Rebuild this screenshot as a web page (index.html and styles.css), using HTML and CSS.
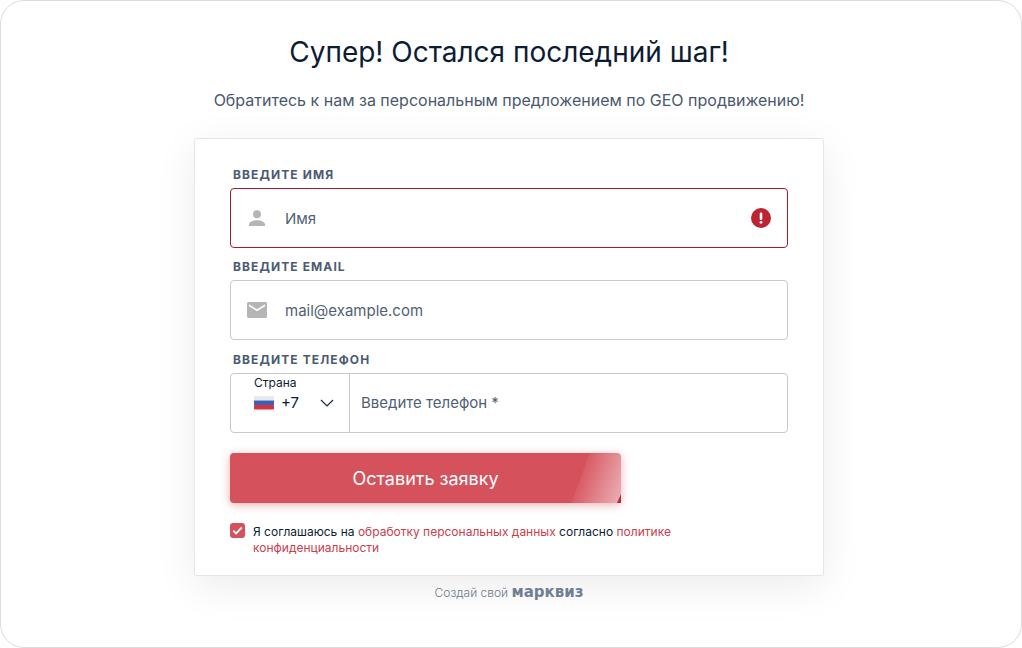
FILE: index.html
```html
<!DOCTYPE html>
<html lang="ru">
<head>
  <meta charset="UTF-8">
  <meta name="viewport" content="width=device-width, initial-scale=1.0">
  <title>Оставить заявку</title>
  <link rel="stylesheet" href="styles.css">
</head>
<body>
  <div class="frame">
    <h1 class="title">Супер! Остался последний шаг!</h1>
    <p class="subtitle">Обратитесь к нам за персональным предложением по GEO продвижению!</p>

    <form class="card">
      <div class="field-label">Введите имя</div>
      <div class="field field-error">
        <svg class="field-icon" width="24" height="24" viewBox="0 0 24 24"><circle cx="12" cy="8.2" r="4"/><path d="M4 20v-1.600c0-2.800 5-4.200 8-4.200s8 1.400 8 4.200V20z"/></svg>
        <span class="placeholder">Имя</span>
        <svg class="error-icon" width="22" height="22" viewBox="0 0 22 22"><circle cx="11" cy="11" r="10" fill="#bd2433"/><rect x="9.7" y="5.5" width="2.6" height="7.5" rx="1.2" fill="#fff"/><circle cx="11" cy="15.3" r="1.4" fill="#fff"/></svg>
      </div>

      <div class="field-label">Введите email</div>
      <div class="field">
        <svg class="field-icon" width="24" height="24" viewBox="0 0 24 24"><path d="M3.500 4h17c.8 0 1.500.7 1.500 1.500v13c0 .8-.7 1.500-1.500 1.500h-17c-.8 0-1.500-.7-1.500-1.500v-13C2 4.700 2.700 4 3.500 4zM12 13.200l8-5V6.300l-8 5-8-5v1.900z" fill-rule="evenodd"/></svg>
        <span class="placeholder">mail@example.com</span>
      </div>

      <div class="field-label">Введите телефон</div>
      <div class="phone">
        <div class="country">
          <div class="country-label">Страна</div>
          <div class="country-value">
            <svg class="flag" width="20" height="14" viewBox="0 0 20 14"><rect y="0" width="20" height="4.500" rx="1" fill="#e9e9ee"/><rect y="4.500" width="20" height="4.500" fill="#3a5fb5"/><rect y="9" width="20" height="4.500" rx="1" fill="#d5313f"/></svg>
            <span class="code">+7</span>
            <svg class="chevron" width="14" height="8" viewBox="0 0 14 8"><path d="M1 1l6 6 6-6" fill="none" stroke="#1c2a3a" stroke-width="1.200"/></svg>
          </div>
        </div>
        <span class="placeholder phone-input">Введите телефон *</span>
      </div>

      <button class="submit" type="button">Оставить заявку</button>

      <div class="agree">
        <span class="checkbox">
          <svg width="11" height="9" viewBox="0 0 11 9"><path d="M1.200 4.600l2.900 2.800 5.700-6" fill="none" stroke="#fff" stroke-width="1.800"/></svg>
        </span>
        <p>Я соглашаюсь на <a href="#">обработку персональных данных</a> согласно <a href="#">политике</a> <a href="#">конфиденциальности</a></p>
      </div>
    </form>

    <div class="brand">Создай свой <b>марквиз</b></div>
  </div>
</body>
</html>
```

FILE: styles.css
```css
* {
  box-sizing: border-box;
}
body {
  margin: 0;
  font-family: Inter, "Noto Sans", sans-serif;
  background-color: #fff;
  color: #0d1c35;
}
.frame {
  height: 648px;
  padding-right: 4px;
  border: 1px solid #dcdcdc;
  border-radius: 24px;
  display: flex;
  flex-direction: column;
  align-items: center;
  overflow: hidden;
}
.title {
  margin: 35px 0 0;
  font-size: 28px;
  line-height: 33px;
  font-weight: 400;
}
.subtitle {
  margin: 20px 0 0;
  font-size: 16px;
  line-height: 22px;
  color: #4a586d;
}
.card {
  width: 630px;
  height: 438px;
  margin-top: 27px;
  padding: 28px 35px 0;
  background-color: #fff;
  border: 1px solid #e6e6e6;
  border-radius: 2px;
  box-shadow: 0 10px 40px rgba(0,0,0,0.08);
}
.field-label {
  margin: 0 0 6px 3px;
  font-size: 12px;
  line-height: 15px;
  font-weight: 700;
  letter-spacing: 1.100px;
  text-transform: uppercase;
  color: #4a5b72;
}
.field {
  display: flex;
  align-items: center;
  height: 60px;
  margin-bottom: 12px;
  padding: 0 10px 0 14px;
  border: 1px solid #c9c9c9;
  border-radius: 4px;
}
.field-error {
  margin-bottom: 11px;
  border-color: #a01c30;
}
.field-icon {
  fill: #b5b5b5;
  flex: none;
}
.placeholder {
  font-size: 15px;
  color: #515f74;
}
.field .placeholder {
  margin-left: 16px;
  flex: 1;
}
.error-icon {
  flex: none;
  margin-right: 5px;
}
.phone {
  display: flex;
  height: 60px;
  border: 1px solid #c9c9c9;
  border-radius: 4px;
}
.country {
  width: 119px;
  flex: none;
  padding: 1px 0 0 23px;
  border-right: 1px solid #c9c9c9;
}
.country-label {
  font-size: 12px;
  line-height: 15px;
}
.country-value {
  display: flex;
  align-items: center;
  margin-top: 2px;
}
.flag {
  flex: none;
}
.code {
  margin-left: 7px;
  font-size: 15px;
  line-height: 22px;
  width: 39px;
}
.phone-input {
  align-self: center;
  margin: 0 0 0 11px;
  padding-bottom: 1px;
}
.submit {
  position: relative;
  display: block;
  width: 391px;
  height: 50px;
  margin-top: 20px;
  border: none;
  border-radius: 4px;
  color: #fff;
  font-family: inherit;
  font-size: 18px;
  background-color: #d5525c;
  background-image: linear-gradient(110deg, transparent 338px, rgba(255,255,255,0.06) 338px, rgba(255,255,255,0.55) 100%);
  box-shadow: 0 2px 10px rgba(213,82,92,0.45);
}
/* tiny dark fold in the corner */
.submit::after {
  content: "";
  position: absolute;
  right: 0;
  bottom: 0;
  width: 4px;
  height: 9px;
  background-color: #b8293a;
  clip-path: polygon(100% 0, 100% 100%, 0 100%);
}
.agree {
  display: flex;
  margin-top: 20px;
}
.checkbox {
  flex: none;
  display: flex;
  align-items: center;
  justify-content: center;
  width: 15px;
  height: 15px;
  margin-right: 8px;
  border-radius: 3px;
  background-color: #d5525c;
}
.agree p {
  margin: 1px 0 0;
  font-size: 12px;
  line-height: 16px;
  color: #0d1c35;
}
.agree a {
  color: #c9404c;
  text-decoration: none;
}
.brand {
  margin-top: 7px;
  font-size: 12px;
  line-height: 18px;
  font-weight: 300;
  color: #6d7a8a;
}
.brand b {
  font-family: "DejaVu Sans", sans-serif;
  font-size: 15px;
  font-weight: 700;
  color: #6f8094;
}
```
